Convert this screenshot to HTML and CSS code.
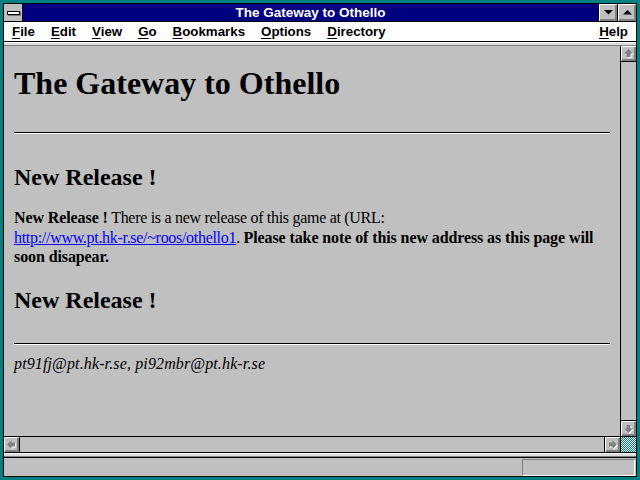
FILE: index.html
```html
<!DOCTYPE html>
<html>
<head>
<meta charset="utf-8">
<title>The Gateway to Othello</title>
<link rel="stylesheet" href="styles.css">
</head>
<body>
<div class="window">
  <div class="frame">
    <div class="titlebar">
      <div class="sysmenu"><span class="sysbar"></span></div>
      <div class="title">The Gateway to Othello</div>
      <div class="tbtn"><svg width="9" height="5" viewBox="0 0 9 5"><polygon points="0,0 9,0 4.5,4.5" fill="#000"/></svg></div>
      <div class="tbtn"><svg width="9" height="5" viewBox="0 0 9 5"><polygon points="0,4.5 9,4.5 4.5,0" fill="#000"/></svg></div>
    </div>
    <div class="menubar">
      <span class="mi"><u>F</u>ile</span>
      <span class="mi"><u>E</u>dit</span>
      <span class="mi"><u>V</u>iew</span>
      <span class="mi"><u>G</u>o</span>
      <span class="mi"><u>B</u>ookmarks</span>
      <span class="mi"><u>O</u>ptions</span>
      <span class="mi"><u>D</u>irectory</span>
      <span class="mi help"><u>H</u>elp</span>
    </div>
    <div class="band"></div>
    <div class="main">
      <div class="content">
        <h1 class="h1">The Gateway to Othello</h1>
        <hr class="rule rule-top">
        <h2 class="h2 h2-first">New Release !</h2>
        <p class="para"><b class="strong">New Release !</b> There is a new release of this game at (URL: <a class="link" href="#">http://www.pt.hk-r.se/~roos/othello1</a>. <b class="strong">Please take note of this new address as this page will soon disapear.</b></p>
        <h2 class="h2 h2-second">New Release !</h2>
        <hr class="rule rule-bottom">
        <address class="addr">pt91fj@pt.hk-r.se, pi92mbr@pt.hk-r.se</address>
      </div>
      <div class="vscroll">
        <div class="sbtn sbtn-up"><svg width="15" height="15" viewBox="0 0 15 15"><polygon points="7.5,3 12,7.5 9.5,7.5 9.5,11 5.5,11 5.5,7.5 3,7.5" fill="#fff" transform="translate(1,1)"/><polygon points="7.5,3 12,7.5 9.5,7.5 9.5,11 5.5,11 5.5,7.5 3,7.5" fill="#808080"/></svg></div>
        <div class="track"></div>
        <div class="sbtn sbtn-down"><svg width="15" height="15" viewBox="0 0 15 15"><g transform="rotate(180 7.5 7.5)"><polygon points="7.5,3 12,7.5 9.5,7.5 9.5,11 5.5,11 5.5,7.5 3,7.5" fill="#fff" transform="translate(-1,-1)"/></g><g transform="rotate(180 7.5 7.5)"><polygon points="7.5,3 12,7.5 9.5,7.5 9.5,11 5.5,11 5.5,7.5 3,7.5" fill="#808080"/></g></svg></div>
      </div>
    </div>
    <div class="hscroll">
      <div class="hbtn hbtn-left"><svg width="15" height="15" viewBox="0 0 15 15"><g transform="rotate(-90 7.5 7.5)"><polygon points="7.5,3 12,7.5 9.5,7.5 9.5,11 5.5,11 5.5,7.5 3,7.5" fill="#fff" transform="translate(-1,1)"/></g><g transform="rotate(-90 7.5 7.5)"><polygon points="7.5,3 12,7.5 9.5,7.5 9.5,11 5.5,11 5.5,7.5 3,7.5" fill="#808080"/></g></svg></div>
      <div class="htrack"></div>
      <div class="hbtn hbtn-right"><svg width="15" height="15" viewBox="0 0 15 15"><g transform="rotate(90 7.5 7.5)"><polygon points="7.5,3 12,7.5 9.5,7.5 9.5,11 5.5,11 5.5,7.5 3,7.5" fill="#fff" transform="translate(1,-1)"/></g><g transform="rotate(90 7.5 7.5)"><polygon points="7.5,3 12,7.5 9.5,7.5 9.5,11 5.5,11 5.5,7.5 3,7.5" fill="#808080"/></g></svg></div>
      <div class="corner"></div>
    </div>
    <div class="band band-low"></div>
    <div class="status"><div class="status-box"></div></div>
  </div>
</div>
</body>
</html>
```
FILE: styles.css
```css
* { box-sizing: border-box; }
html, body { margin: 0; padding: 0; }
body {
  width: 640px;
  height: 480px;
  overflow: hidden;
  background: #008080;
  font-family: "Liberation Sans", Arial, sans-serif;
}
.window {
  width: 640px;
  height: 480px;
  padding: 3px;
  background: #008080;
}
.frame {
  height: 474px;
  border: 1px solid #000;
  background: #c0c0c0;
  display: flex;
  flex-direction: column;
}
.titlebar {
  height: 18px;
  flex: none;
  display: flex;
  background: #000080;
  border-bottom: 1px solid #000;
}
.sysmenu {
  width: 19px;
  background: #c0c0c0;
  border-right: 1px solid #000;
  display: flex;
  align-items: center;
  justify-content: center;
}
.sysbar {
  display: block;
  width: 13px;
  height: 4px;
  background: #fff;
  border: 1px solid #000;
  box-shadow: 1px 1px 0 #808080;
}
.title {
  flex: 1;
  color: #fff;
  font-weight: bold;
  font-size: 13.5px;
  line-height: 17px;
  text-align: center;
  white-space: nowrap;
}
.tbtn {
  width: 19px;
  border-left: 1px solid #000;
  background: #c0c0c0;
  box-shadow: inset 1px 1px 0 #fff, inset -2px -2px 0 #808080;
  display: flex;
  align-items: center;
  justify-content: center;
}
.menubar {
  height: 20px;
  flex: none;
  display: flex;
  background: #fff;
  border-bottom: 1px solid #000;
  font-size: 13.3px;
  font-weight: bold;
  line-height: 19px;
  color: #000;
}
.mi { padding: 0 8px; white-space: nowrap; }
.mi u { text-decoration-thickness: 1px; text-underline-offset: 2px; }
.help { margin-left: auto; }
.band {
  height: 4px;
  flex: none;
  background: #dcdcdc;
  border-top: 1px solid #fff;
  border-bottom: 1px solid #808080;
}
.main {
  flex: 1 1 0;
  display: flex;
  min-height: 0;
}
.content {
  flex: 1;
  padding: 0 10px;
  overflow: hidden;
  display: flow-root;
  font-family: "Liberation Serif", "Times New Roman", serif;
  color: #000;
}
.h1 {
  font-size: 32px;
  line-height: 37px;
  font-weight: bold;
  margin: 19px 0 0;
}
.rule {
  height: 0;
  border: 0;
  border-top: 1px solid #000;
  border-bottom: 1px solid #fff;
  margin: 0;
}
.rule-top { margin-top: 30px; }
.rule-bottom { margin-top: 29px; }
.h2 {
  font-size: 24px;
  line-height: 28px;
  font-weight: bold;
  margin: 0;
}
.h2-first { margin-top: 29px; }
.h2-second { margin-top: 19px; }
.para {
  font-size: 16px;
  line-height: 19.5px;
  margin: 17px 0 0;
  letter-spacing: -0.3px;
}
.strong { letter-spacing: -0.1px; }
.link { color: #0000ff; text-decoration: underline; white-space: nowrap; }
.addr {
  font-size: 16px;
  line-height: 20px;
  font-style: italic;
  letter-spacing: 0.13px;
  margin: 9px 0 0;
}
.vscroll {
  width: 16px;
  flex: none;
  border-left: 1px solid #000;
  display: flex;
  flex-direction: column;
}
.sbtn {
  height: 16px;
  flex: none;
  background: #c0c0c0;
  box-shadow: inset 1px 1px 0 #fff, inset -2px -2px 0 #808080;
}
.sbtn svg, .hbtn svg { display: block; }
.sbtn-up { border-bottom: 1px solid #000; }
.sbtn-down { border-top: 1px solid #000; }
.track { flex: 1; background: #c0c0c0; }
.hscroll {
  height: 17px;
  flex: none;
  display: flex;
  border-top: 1px solid #000;
  border-bottom: 1px solid #000;
}
.hbtn {
  width: 16px;
  flex: none;
  background: #c0c0c0;
  box-shadow: inset 1px 1px 0 #fff, inset -2px -2px 0 #808080;
}
.hbtn-left { border-right: 1px solid #000; }
.hbtn-right { border-left: 1px solid #000; }
.htrack { flex: 1; background: #c0c0c0; }
.corner {
  width: 16px;
  flex: none;
  border-left: 1px solid #000;
  background: repeating-conic-gradient(#008080 0 25%, #ffffff 0 50%) 0 0 / 2px 2px;
}
.status {
  height: 19px;
  flex: none;
  display: flex;
  border-top: 1px solid #000;
  background: #c0c0c0;
}
.status-box {
  margin: 1px 1px 0 auto;
  width: 113px;
  height: 17px;
  border-top: 1px solid #808080;
  border-left: 1px solid #808080;
  border-bottom: 1px solid #fff;
  border-right: 1px solid #fff;
}
```
